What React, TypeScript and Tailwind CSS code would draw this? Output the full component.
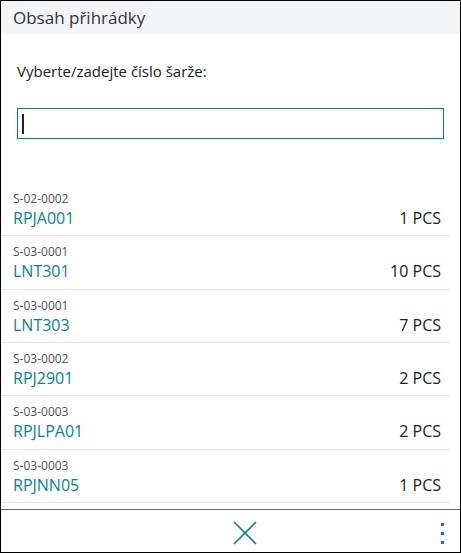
const rows = [
    { bin: 'S-02-0002', lot: 'RPJA001', qty: '1 PCS' },
    { bin: 'S-03-0001', lot: 'LNT301', qty: '10 PCS' },
    { bin: 'S-03-0001', lot: 'LNT303', qty: '7 PCS' },
    { bin: 'S-03-0002', lot: 'RPJ2901', qty: '2 PCS' },
    { bin: 'S-03-0003', lot: 'RPJLPA01', qty: '2 PCS' },
    { bin: 'S-03-0003', lot: 'RPJNN05', qty: '1 PCS' },
];

export default function App() {
    return (
        <div
            className="w-[461px] h-[553px] border border-black bg-white flex flex-col overflow-hidden text-[#212121]"
            style={{ fontFamily: '"Open Sans", "Noto Sans", sans-serif' }}
        >
            {/* Header */}
            <div className="h-[33px] shrink-0 bg-[#f4f5f7] px-3 flex items-center">
                <h1 className="text-[17px] text-[#333] leading-none">Obsah přihrádky</h1>
            </div>

            {/* Lot input */}
            <div className="px-4 pt-[27px]">
                <p className="text-[15px] leading-5 text-[#212121]">Vyberte/zadejte číslo šarže:</p>
                <div className="mt-[27px] h-[31px] border border-[#00848b] flex items-center pl-1">
                    <span className="block w-[2px] h-[20px] bg-[#222]" />
                </div>
            </div>

            {/* Bin content list */}
            <div className="mt-[44px] flex-1 overflow-hidden pr-[10px]">
                {rows.map((r, i) => (
                    <div key={i} className="h-[53.33px] border-b border-[#e6e6e6] pl-3 pr-[9px] pt-[8px]">
                        <p className="text-[12px] leading-[16px] text-[#505050]">{r.bin}</p>
                        <div className="flex items-center justify-between leading-[22px]">
                            <span className="text-[16px] text-[#0a8391]">{r.lot}</span>
                            <span className="text-[16px] text-[#212121]">{r.qty}</span>
                        </div>
                    </div>
                ))}
            </div>

            {/* Footer */}
            <div className="h-[43px] shrink-0 border-t border-[#666] relative flex items-center justify-center">
                <svg width="24" height="24" viewBox="0 0 24 24" className="mt-[3px] ml-[28px]">
                    <path d="M1 1 L23 23 M23 1 L1 23" stroke="#0b7f8c" strokeWidth="1.6" fill="none" />
                </svg>
                <div className="absolute right-[16px] top-[13px] flex flex-col gap-[6px]">
                    <span className="block w-[3px] h-[3px] bg-[#0b7f8c]" />
                    <span className="block w-[3px] h-[3px] bg-[#0b7f8c]" />
                    <span className="block w-[3px] h-[3px] bg-[#0b7f8c]" />
                </div>
            </div>
        </div>
    );
}
